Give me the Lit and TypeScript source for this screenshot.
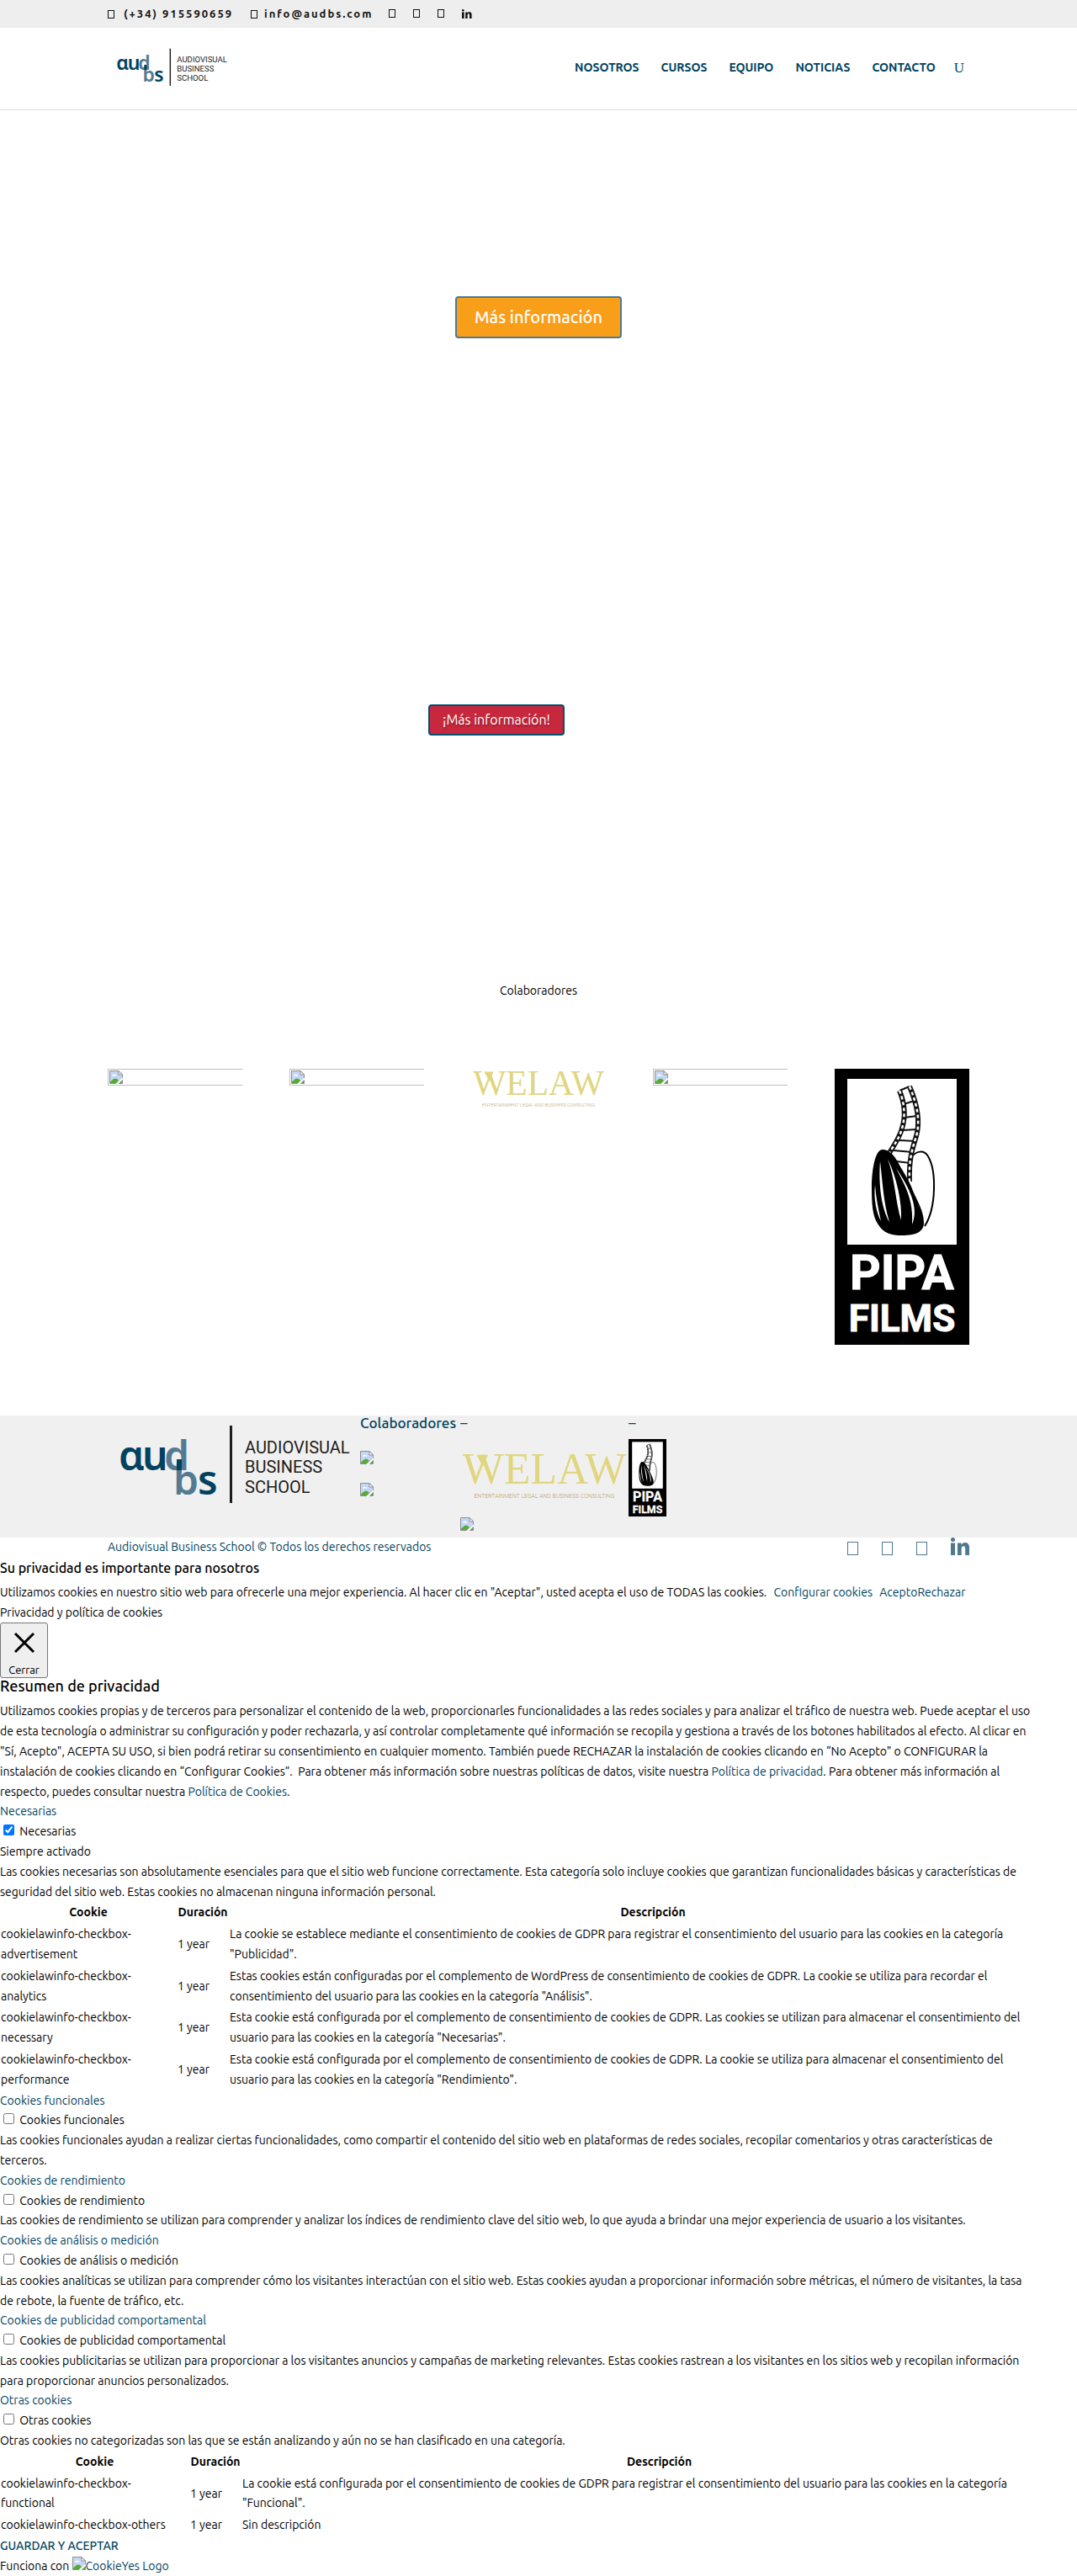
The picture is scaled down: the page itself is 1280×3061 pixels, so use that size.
import { LitElement, html, css } from "lit";
import { customElement, property } from "lit/decorators.js";

const FONT = css`"Ubuntu", "Noto Sans", "Open Sans", sans-serif`;

/** Placeholder drawn where a picture has not loaded. */
@customElement("missing-picture")
class MissingPicture extends LitElement {
  static styles = css`
    :host { display: inline-block; width: 16px; height: 16px; overflow: hidden; }
    svg { display: block; width: 16px; height: 16px; }
  `;
  render() {
    return html`<svg viewBox="0 0 16 16" aria-hidden="true">
      <path d="M1 0.5H11L15.5 5V9L8 15.5H0.5V0.5Z" fill="#c3d6f5" stroke="#8f8f8f" />
      <path d="M11 0.5V5H15.5Z" fill="#fff" stroke="#8f8f8f" />
      <path d="M3 6.5C3 5 5 4 6 5C7.5 4.5 8.5 5.5 8.5 6.5Z" fill="#fff" />
      <path d="M1 15V13.5C3 12 4.5 9.5 7 9.5C9 9.5 10 11 11 12L8 15Z" fill="#55ab33" />
      <path d="M7.5 16L15.5 8.5V11L10.5 16Z" fill="#fff" />
      <path d="M11.5 15.5H15.5V11.5Z" fill="#55ab33" stroke="#8f8f8f" />
    </svg>`;
  }
}

@customElement("school-logo")
class SchoolLogo extends LitElement {
  static styles = css`
    :host { display: block; }
    svg { display: block; width: 100%; height: auto; }
    .mark { font: 600 48px "Noto Sans", sans-serif; }
    .dark { fill: #00425f; }
    .soft { fill: #547a94; }
    .words { font: 400 20px Roboto, sans-serif; fill: #1d1d1b; }
  `;
  render() {
    return html`<svg viewBox="0 0 300 113" role="img" aria-label="Audiovisual Business School">
      <g class="mark">
        <text class="dark" x="13" y="65">ɑ</text>
        <text class="dark" x="41" y="65">u</text>
        <text class="soft" x="67" y="65">d</text>
        <text class="soft" x="78" y="94">b</text>
        <text class="dark" x="107" y="94">s</text>
      </g>
      <rect x="82" y="52" width="6" height="13" fill="#00425f" />
      <rect x="145" y="12" width="3" height="92" fill="#1d1d1b" />
      <g class="words">
        <text x="163" y="45">AUDIOVISUAL</text>
        <text x="163" y="68">BUSINESS</text>
        <text x="163" y="92">SCHOOL</text>
      </g>
    </svg>`;
  }
}

@customElement("welaw-logo")
class WelawLogo extends LitElement {
  static styles = css`
    :host { display: block; }
    svg { display: block; width: 100%; height: auto; overflow: visible; }
    .name { font: 83px "Liberation Serif", serif; fill: #e0d67f; }
    .tag { font: 300 11px Roboto, sans-serif; fill: #b99c6a; }
  `;
  render() {
    return html`<svg viewBox="0 0 320 92" role="img" aria-label="Welaw">
      <text class="name" x="160" y="62" text-anchor="middle">WELAW</text>
      <path d="M31 7H53L43 30Z" fill="#e0d67f" />
      <text class="tag" x="160" y="90" text-anchor="middle">ENTERTAINMENT LEGAL AND BUSINESS CONSULTING</text>
    </svg>`;
  }
}

@customElement("pipa-logo")
class PipaLogo extends LitElement {
  static styles = css`
    :host { display: block; }
    svg { display: block; width: 100%; height: auto; }
    .name { font-family: Roboto, sans-serif; font-weight: 700; fill: #fff; stroke: #fff; }
    .pipa { font-size: 57px; }
    .films { font-size: 44px; }
  `;
  render() {
    const left = "M77 26C82 38 85 55 80 71C77 82 71 90 65 100";
    const right = "M89 21C98 42 102 62 97 80C92 96 88 108 89 134";
    return html`<svg viewBox="0 0 160 328" role="img" aria-label="Pipa Films">
      <rect width="160" height="328" fill="#000" />
      <rect x="15" y="12" width="130" height="197" fill="#fff" />
      <path d="M93 103C98 98 106 96 111 104C121 121 121 165 107 187" fill="none" stroke="#000" stroke-width="2" />
      <g fill="none" stroke="#111">
        <path d=${left} stroke-width="6" />
        <path d=${right} stroke-width="6" />
        <path d="M77 26L89 21M82 42L95 38M83 58L98 56M81 73L98 72M77 85L96 86M70 97L92 99M73 110L90 112" stroke-width="2" />
      </g>
      <g fill="none" stroke="#fff" stroke-width="2.5" stroke-dasharray="4 3">
        <path d=${left} />
        <path d=${right} />
      </g>
      <path d="M57 96C48 96 44 120 44 142C44 160 45 175 51 184C58 196 68 198 80 198C96 198 106 194 106 183C106 169 98 157 93 145C88 131 82 124 74 109C70 102 64 96 57 96Z" />
      <g fill="#fff">
        <path d="M54 110C52 135 55 165 65 182C58 160 57 135 54 110Z" />
        <path d="M63 107C72 132 72 158 79 180C80 158 74 130 63 107Z" />
        <path d="M73 118C83 138 94 155 92 185C101 165 88 140 73 118Z" />
        <path d="M48 138C46 155 50 172 55 181C52 167 49 153 48 138Z" />
      </g>
      <g class="name">
        <text class="pipa" x="80" y="262" text-anchor="middle">PIPA</text>
        <text class="films" x="80" y="312" text-anchor="middle">FILMS</text>
      </g>
    </svg>`;
  }
}

/** Social links: three empty glyph boxes and the LinkedIn mark. */
@customElement("social-links")
class SocialLinks extends LitElement {
  @property({ type: Boolean, reflect: true }) large = false;
  static styles = css`
    :host { display: flex; gap: 21px; color: #111; }
    :host([large]) { gap: 28px; color: #4f7891; }
    a { display: flex; align-items: flex-end; color: inherit; }
    svg { display: block; width: auto; height: 11px; }
    :host([large]) svg { height: 21px; }
  `;
  render() {
    const names = ["Facebook", "Twitter", "Instagram"];
    const box = () => this.large
      ? html`<svg viewBox="0 0 13 21"><rect x="0.5" y="5.5" width="12" height="15" fill="none" stroke="currentColor" /></svg>`
      : html`<svg viewBox="0 0 8 11"><rect x="0.5" y="0.5" width="7" height="9" fill="none" stroke="currentColor" /></svg>`;
    return html`
      ${names.map((n) => html`<a href="#" aria-label=${n}>${box()}</a>`)}
      <a href="#" aria-label="LinkedIn">
        <svg viewBox="0 0 22 21" fill="currentColor">
          <circle cx="2.5" cy="2.5" r="2.5" />
          <rect x="0" y="6.5" width="5" height="14.5" />
          <path d="M8 6.5H12.5V8.5C13.5 7 15 6.1 17 6.1C20.5 6.1 22 8.5 22 12V21H17.2V13.2C17.2 11.3 16.5 10.2 15 10.2C13.5 10.2 12.7 11.3 12.7 13.2V21H8Z" />
        </svg>
      </a>
    `;
  }
}

type Row = [string, string, string];

const NECESSARY: Row[] = [
  ["cookielawinfo-checkbox-advertisement", "1 year", 'La cookie se establece mediante el consentimiento de cookies de GDPR para registrar el consentimiento del usuario para las cookies en la categoría "Publicidad".'],
  ["cookielawinfo-checkbox-analytics", "1 year", 'Estas cookies están configuradas por el complemento de WordPress de consentimiento de cookies de GDPR. La cookie se utiliza para recordar el consentimiento del usuario para las cookies en la categoría "Análisis".'],
  ["cookielawinfo-checkbox-necessary", "1 year", 'Esta cookie está configurada por el complemento de consentimiento de cookies de GDPR. Las cookies se utilizan para almacenar el consentimiento del usuario para las cookies en la categoría "Necesarias".'],
  ["cookielawinfo-checkbox-performance", "1 year", 'Esta cookie está configurada por el complemento de consentimiento de cookies de GDPR. La cookie se utiliza para almacenar el consentimiento del usuario para las cookies en la categoría "Rendimiento".'],
];

const OTHERS: Row[] = [
  ["cookielawinfo-checkbox-functional", "1 year", 'La cookie está configurada por el consentimiento de cookies de GDPR para registrar el consentimiento del usuario para las cookies en la categoría "Funcional".'],
  ["cookielawinfo-checkbox-others", "1 year", "Sin descripción"],
];

interface Category {
  id: string;
  name: string;
  text: string;
  always?: boolean;
  rows?: Row[];
}

const CATEGORIES: Category[] = [
  { id: "necessary", name: "Necesarias", always: true, rows: NECESSARY, text: "Las cookies necesarias son absolutamente esenciales para que el sitio web funcione correctamente. Esta categoría solo incluye cookies que garantizan funcionalidades básicas y características de seguridad del sitio web. Estas cookies no almacenan ninguna información personal." },
  { id: "functional", name: "Cookies funcionales", text: "Las cookies funcionales ayudan a realizar ciertas funcionalidades, como compartir el contenido del sitio web en plataformas de redes sociales, recopilar comentarios y otras características de terceros." },
  { id: "performance", name: "Cookies de rendimiento", text: "Las cookies de rendimiento se utilizan para comprender y analizar los índices de rendimiento clave del sitio web, lo que ayuda a brindar una mejor experiencia de usuario a los visitantes." },
  { id: "analytics", name: "Cookies de análisis o medición", text: "Las cookies analíticas se utilizan para comprender cómo los visitantes interactúan con el sitio web. Estas cookies ayudan a proporcionar información sobre métricas, el número de visitantes, la tasa de rebote, la fuente de tráfico, etc." },
  { id: "advertisement", name: "Cookies de publicidad comportamental", text: "Las cookies publicitarias se utilizan para proporcionar a los visitantes anuncios y campañas de marketing relevantes. Estas cookies rastrean a los visitantes en los sitios web y recopilan información para proporcionar anuncios personalizados." },
  { id: "others", name: "Otras cookies", rows: OTHERS, text: "Otras cookies no categorizadas son las que se están analizando y aún no se han clasificado en una categoría." },
];

@customElement("cookie-panel")
class CookiePanel extends LitElement {
  static styles = css`
    :host { display: block; font: 14px/1.7 ${FONT}; color: #000; }
    a { color: #00425f; text-decoration: none; }
    p, h4, h5 { margin: 0; }
    h4, h5 { font-weight: 500; line-height: 1; padding-bottom: 10px; }
    h4 { font-size: 18px; }
    h5 { font-size: 16px; }
    .copy { padding-right: 48px; }
    .action { margin-left: 5px; }
    .close { display: flex; flex-direction: column; align-items: center; width: 57px; height: 66px; padding: 3px 0 0; border: 1px solid #767676; border-radius: 3px; background: #efefef; font: 13px/15px ${FONT}; color: #000; }
    .close svg { width: 40px; height: 40px; margin-bottom: 5px; }
    .tick { width: 13px; height: 13px; margin: 3px 3px 3px 4px; }
    .cookies { width: 100%; border-collapse: collapse; table-layout: fixed; }
    .cookies th, .cookies td { padding: 1px; }
    .cookies td { text-align: left; }
    .cookies td:first-child { padding-right: 12px; }
    .cookies td:last-child { padding-right: 40px; }
    .name { width: 208px; }
    .wide .name { width: 223px; }
    .time { width: 60px; }
    .save { font-weight: 500; }
  `;
  private table(rows: Row[], wide: boolean) {
    return html`<table class=${wide ? "cookies wide" : "cookies"}>
      <thead><tr><th class="name">Cookie</th><th class="time">Duración</th><th>Descripción</th></tr></thead>
      <tbody>${rows.map((r) => html`<tr>${r.map((c) => html`<td>${c}</td>`)}</tr>`)}</tbody>
    </table>`;
  }
  render() {
    return html`
      <h5>Su privacidad es importante para nosotros</h5>
      <div>Utilizamos cookies en nuestro sitio web para ofrecerle una mejor experiencia. Al hacer clic en "Aceptar", usted acepta el uso de TODAS las cookies. <a class="action" href="#">Configurar cookies</a> <a class="action" href="#">Acepto</a><a href="#">Rechazar</a></div>
      <div>Privacidad y política de cookies</div>
      <button class="close" type="button">
        <svg viewBox="0 0 40 40" aria-hidden="true"><path d="M9 9L31 31M31 9L9 31" stroke="#000" stroke-width="3" /></svg>
        Cerrar
      </button>
      <h4>Resumen de privacidad</h4>
      <p class="copy">Utilizamos cookies propias y de terceros para personalizar el contenido de la web, proporcionarles funcionalidades a las redes sociales y para analizar el tráfico de nuestra web. Puede aceptar el uso de esta tecnología o administrar su configuración y poder rechazarla, y así controlar completamente qué información se recopila y gestiona a través de los botones habilitados al efecto. Al clicar en "Sí, Acepto", ACEPTA SU USO, si bien podrá retirar su consentimiento en cualquier momento. También puede RECHAZAR la instalación de cookies clicando en “No Acepto" o CONFIGURAR la instalación de cookies clicando en “Configurar Cookies”.&nbsp; Para obtener más información sobre nuestras políticas de datos, visite nuestra <a href="#">Política de privacidad</a>. Para obtener más información al respecto, puedes consultar nuestra <a href="#">Política de Cookies</a>.</p>
      ${CATEGORIES.map((c) => html`
        <div><a href="#">${c.name}</a></div>
        <div><input class="tick" type="checkbox" id=${c.id} .checked=${!!c.always}> <label for=${c.id}>${c.name}</label></div>
        ${c.always ? html`<div>Siempre activado</div>` : ""}
        <div class="copy">${c.text}</div>
        ${c.rows ? this.table(c.rows, !c.always) : ""}
      `)}
      <div><a class="save" href="#">GUARDAR Y ACEPTAR</a></div>
      <div>Funciona con <a href="#"><missing-picture></missing-picture>CookieYes Logo</a></div>
    `;
  }
}

@customElement("app-root")
class AppRoot extends LitElement {
  static styles = css`
    :host { display: block; background: #fff; font: 14px/1.7 ${FONT}; color: #000; }
    a { color: #00425f; text-decoration: none; }
    .wrap { width: 80%; max-width: 1080px; margin: 0 auto; }
    .top { background: #eee; }
    .topline { display: flex; align-items: center; height: 33px; font-size: 13px; font-weight: 700; letter-spacing: 2px; }
    .topline a { display: flex; align-items: center; color: #111; }
    .phone { gap: 11px; margin-right: 21px; }
    .mail { gap: 8px; margin-right: 19px; }
    .tofu { width: 8px; height: 10px; box-sizing: border-box; border: 1px solid #111; }
    .header { border-bottom: 1px solid #e2e2e2; }
    .headline { display: flex; align-items: center; justify-content: space-between; height: 97px; }
    .headline school-logo { width: 144px; margin: 0 4px 4px; }
    .nav { display: flex; align-items: center; gap: 26px; padding: 0 6px 2px 0; font-weight: 700; }
    .search { margin-left: -4px; padding: 0; border: 0; background: none; font: 17px/24px "Liberation Serif", serif; color: #00425f; }
    .hero { display: flex; justify-content: center; padding: 221px 0; }
    .offer { display: flex; justify-content: center; padding: 214px 100px 214px 0; }
    .button { border: 2px solid; border-radius: 4px; color: #fff; font-weight: 500; }
    .orange { padding: 6px 21px; border-color: #4f7891; background: #f99e19; font-size: 20px; line-height: 34px; }
    .red { padding: 4px 15px; border-color: #00516f; background: #c8283e; font-size: 16px; line-height: 25px; font-weight: 400; text-shadow: 1px 2px 2px rgba(0, 0, 0, 0.3); }
    .lead { margin: 0; padding: 78px 0 80px; text-align: center; }
    .partners { display: grid; grid-template-columns: repeat(5, 1fr); gap: 56px; align-items: start; padding-bottom: 84px; }
    .broken { display: flex; height: 20px; box-sizing: border-box; padding: 1px; border: 1px solid silver; border-right: 0; }
    .foot { background: #f0f0f0; }
    .footgrid { display: grid; grid-template-columns: 300px 119px 200px 45px; height: 145px; }
    .col { display: flex; flex-direction: column; align-items: flex-start; gap: 22px; }
    .col welaw-logo, .col pipa-logo { width: 100%; }
    .title { margin: 0 0 2px; font-size: 17px; line-height: 18px; font-weight: 500; color: #00425f; }
    .tight { gap: 8px; }
    .bottom { display: flex; justify-content: space-between; height: 28px; color: #00425f; }
    .bottom social-links { align-self: flex-start; }
  `;
  render() {
    return html`
      <div class="top"><div class="wrap topline">
        <a class="phone" href="tel:+34915590659"><span class="tofu"></span>(+34) 915590659</a>
        <a class="mail" href="mailto:info@audbs.com"><span class="tofu"></span>info@audbs.com</a>
        <social-links></social-links>
      </div></div>
      <header class="header"><div class="wrap headline">
        <school-logo></school-logo>
        <nav class="nav">
          ${["NOSOTROS", "CURSOS", "EQUIPO", "NOTICIAS", "CONTACTO"].map((n) => html`<a href="#">${n}</a>`)}
          <button class="search" type="button" aria-label="Buscar">U</button>
        </nav>
      </div></header>
      <section class="hero"><a class="button orange" href="#">Más información</a></section>
      <section class="offer"><a class="button red" href="#">¡Más información!</a></section>
      <section class="wrap">
        <p class="lead">Colaboradores</p>
        <div class="partners">
          <div class="broken"><missing-picture></missing-picture></div>
          <div class="broken"><missing-picture></missing-picture></div>
          <welaw-logo></welaw-logo>
          <div class="broken"><missing-picture></missing-picture></div>
          <pipa-logo></pipa-logo>
        </div>
      </section>
      <footer>
        <div class="foot"><div class="wrap footgrid">
          <school-logo></school-logo>
          <div class="col"><h4 class="title">Colaboradores</h4><missing-picture></missing-picture><missing-picture></missing-picture></div>
          <div class="col"><h4 class="title">–</h4><welaw-logo></welaw-logo><missing-picture></missing-picture></div>
          <div class="col tight"><h4 class="title">–</h4><pipa-logo></pipa-logo></div>
        </div></div>
        <div class="wrap bottom">
          <span>Audiovisual Business School © Todos los derechos reservados</span>
          <social-links large></social-links>
        </div>
      </footer>
      <cookie-panel></cookie-panel>
    `;
  }
}
